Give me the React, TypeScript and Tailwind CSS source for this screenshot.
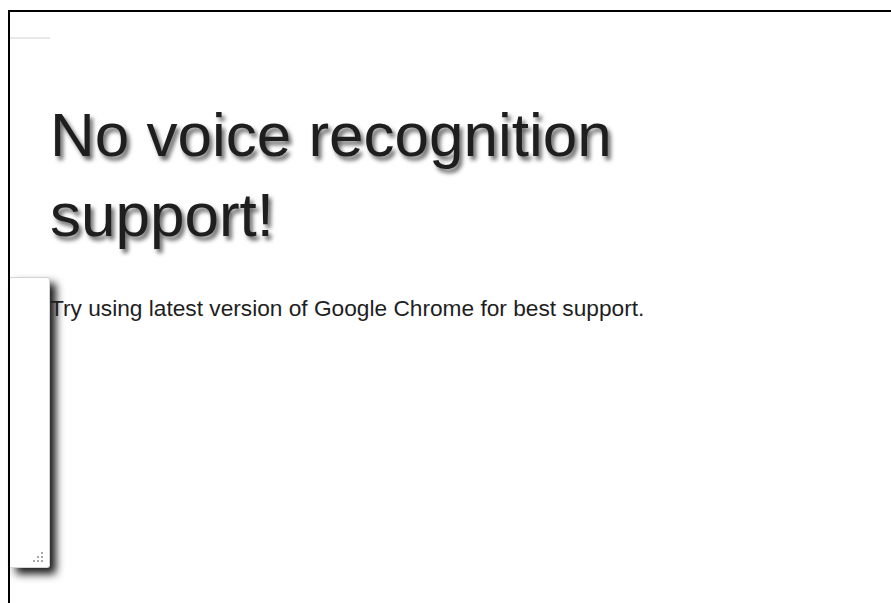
export default function App() {
  return (
    <div className="min-h-[603px] w-[891px] overflow-hidden bg-white font-['Liberation_Sans',Arial,sans-serif]">
      <div className="ml-[8px] mt-[10px] min-h-[593px] w-[900px] border-l-2 border-t-2 border-black">
        {/* short rule at the top of the side column */}
        <div className="mt-[25px] h-[2px] w-[40px] bg-[#e8e8e8]" />

        <h1 className="ml-[40px] mt-[56px] text-[62px] leading-[80px] font-normal text-[#1e1e1e] [text-shadow:3px_4px_4px_rgba(0,0,0,0.6)]">
          No voice recognition
          <br />
          support!
        </h1>

        <div className="mt-[22px] flex items-start">
          {/* transcript box */}
          <div className="relative h-[291px] w-[40px] shrink-0 rounded-r-[3px] border border-l-0 border-[#d4d4d4] bg-white shadow-[6px_6px_8px_rgba(0,0,0,0.9)]">
            <svg
              className="absolute bottom-[4px] right-[5px]"
              width="11"
              height="11"
              viewBox="0 0 11 11"
            >
              <g fill="#a8a8a8">
                <rect x="8" y="0" width="2" height="2" />
                <rect x="4" y="4" width="2" height="2" />
                <rect x="8" y="4" width="2" height="2" />
                <rect x="0" y="8" width="2" height="2" />
                <rect x="4" y="8" width="2" height="2" />
                <rect x="8" y="8" width="2" height="2" />
              </g>
            </svg>
          </div>
          <p className="relative mt-[18px] text-[22.7px] leading-[26px] text-[#1e1e1e]">
            Try using latest version of Google Chrome for best support.
          </p>
        </div>
      </div>
    </div>
  );
}
